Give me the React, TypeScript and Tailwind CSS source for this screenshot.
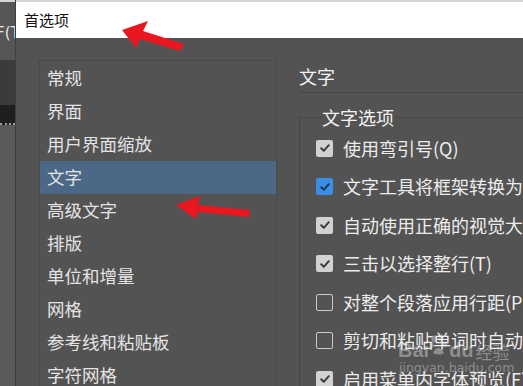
import React from 'react'

const cjk = { fontFamily: '"Noto Sans CJK SC", "Noto Sans", sans-serif' }

const navItems = ['常规', '界面', '用户界面缩放', '文字', '高级文字', '排版', '单位和增量', '网格', '参考线和粘贴板', '字符网格']

type Opt = { label: string; state: 'gray' | 'blue' | 'off' }

const options: Opt[] = [
  { label: '使用弯引号(Q)', state: 'gray' },
  { label: '文字工具将框架转换为区域文字框架', state: 'blue' },
  { label: '自动使用正确的视觉大小', state: 'gray' },
  { label: '三击以选择整行(T)', state: 'gray' },
  { label: '对整个段落应用行距(P)', state: 'off' },
  { label: '剪切和粘贴单词时自动调整间距(J)', state: 'off' },
  { label: '启用菜单内字体预览(F)', state: 'gray' },
]

function Checkbox({ state }: { state: Opt['state'] }) {
  if (state === 'off') {
    return <div className="w-[17px] h-[17px] rounded-[2px] border-[1.5px] border-[#c9c9c9] shrink-0" />
  }
  const bg = state === 'blue' ? 'bg-[#3a8ee6]' : 'bg-[#d2d2d2]'
  const stroke = state === 'blue' ? '#1d3552' : '#3c3c3c'
  return (
    <div className={`w-[17px] h-[17px] rounded-[2px] ${bg} flex items-center justify-center shrink-0`}>
      <svg width="12" height="12" viewBox="0 0 12 12">
        <path d="M2.2 6.3 L4.8 8.8 L9.8 3.2" fill="none" stroke={stroke} strokeWidth="2" strokeLinecap="round" strokeLinejoin="round" />
      </svg>
    </div>
  )
}

export default function App() {
  return (
    <div className="relative w-[523px] h-[386px] overflow-hidden flex bg-[#555555]" style={cjk}>
      {/* app behind the dialog */}
      <div className="w-4 shrink-0 flex flex-col border-r border-[#3e3e3e]">
        <div className="h-[2px] shrink-0 bg-[#d6d6d6]" />
        <div className="h-[58px] shrink-0 bg-[#565656] flex items-center text-[15px] text-[#e8e8e8] overflow-hidden whitespace-nowrap pt-1">
          <span className="-ml-[4px]" style={{ fontFamily: '"DejaVu Sans", sans-serif' }}>F(T</span>
        </div>
        <div className="h-[45px] shrink-0 bg-[#3b3b3b]" />
        <div className="h-[20px] shrink-0 bg-[#1f1f1f] border-b-2 border-dotted border-[#9a9a9a]" />
        <div className="flex-1 bg-[#5a5a5a]" />
      </div>

      {/* dialog */}
      <div className="flex-1 flex flex-col min-w-0">
        <div className="h-[2px] shrink-0 bg-[#d6d6d6]" />
        <div className="h-9 shrink-0 bg-white flex items-center pl-2 text-[15px] text-[#111]">首选项</div>
        <div className="flex-1 min-h-0 overflow-hidden bg-[#535353] flex pt-[22px]">
          {/* nav list */}
          <div className="ml-[23px] w-[238px] border-l border-t border-r border-[#494949] pt-[1px] shrink-0">
            {navItems.map((item) => (
              <div
                key={item}
                className={`h-[33px] shrink-0 flex items-center pl-[7px] text-[17.5px] text-[#e4e4e4] whitespace-nowrap ${item === '文字' ? 'bg-[#4b6987]' : ''}`}
              >
                {item}
              </div>
            ))}
          </div>

          {/* settings */}
          <div className="ml-[22px] flex-1 min-w-0 flex flex-col">
            <div className="mt-[5px] h-[22px] shrink-0 flex items-center text-[18px] text-[#f2f2f2]">文字</div>
            <div className="mt-[5px] h-px shrink-0 bg-[#474747]" />
            <div className="relative mt-[24px] flex-1 border-l border-t border-[#474747] pt-[11px] pl-4">
              <div className="absolute -top-[12px] left-[21px] px-[1px] bg-[#535353] text-[18px] text-[#f2f2f2] leading-[22px]">文字选项</div>
              {options.map((o) => (
                <div key={o.label} className="h-[38.5px] shrink-0 flex items-center gap-[10px] whitespace-nowrap">
                  <Checkbox state={o.state} />
                  <span className="text-[18px] text-[#ececec]">{o.label}</span>
                </div>
              ))}
            </div>
          </div>
        </div>
      </div>

      {/* annotation arrows */}
      <svg className="absolute inset-0 pointer-events-none" width="523" height="386">
        <polygon points="122,30 148,21 143,31 184,44 180,51 140,39 136,48" fill="#ea1620" />
        <polygon points="176,205 200,196 198,205 250,210 249,217 198,212 196,219" fill="#ea1620" />
      </svg>

      {/* watermark */}
      <div className="absolute left-[398px] top-[326px] w-[112px] pointer-events-none text-white/35 whitespace-nowrap">
        <div className="flex items-end leading-none h-[34px]">
          <span className="text-[20px] font-bold" style={{ fontFamily: '"Liberation Sans", sans-serif' }}>Bai</span>
          <svg width="20" height="22" viewBox="0 0 20 22" className="mb-[4px] fill-white/35">
            <ellipse cx="5" cy="5" rx="2.6" ry="3.4" />
            <ellipse cx="12" cy="4" rx="2.6" ry="3.4" />
            <ellipse cx="2.5" cy="11" rx="2.2" ry="2.8" />
            <ellipse cx="16" cy="10" rx="2.2" ry="2.8" />
            <path d="M4 19 Q9 9 15 19 Q10 22 4 19 Z" />
          </svg>
          <span className="text-[20px] font-bold" style={{ fontFamily: '"Liberation Sans", sans-serif' }}>du</span>
          <span className="text-[17px] ml-[2px]">经验</span>
        </div>
        <div className="text-[12.5px] leading-[15px] ml-[1px]" style={{ fontFamily: '"DejaVu Sans", sans-serif' }}>jingyan.baidu.com</div>
      </div>
    </div>
  )
}
